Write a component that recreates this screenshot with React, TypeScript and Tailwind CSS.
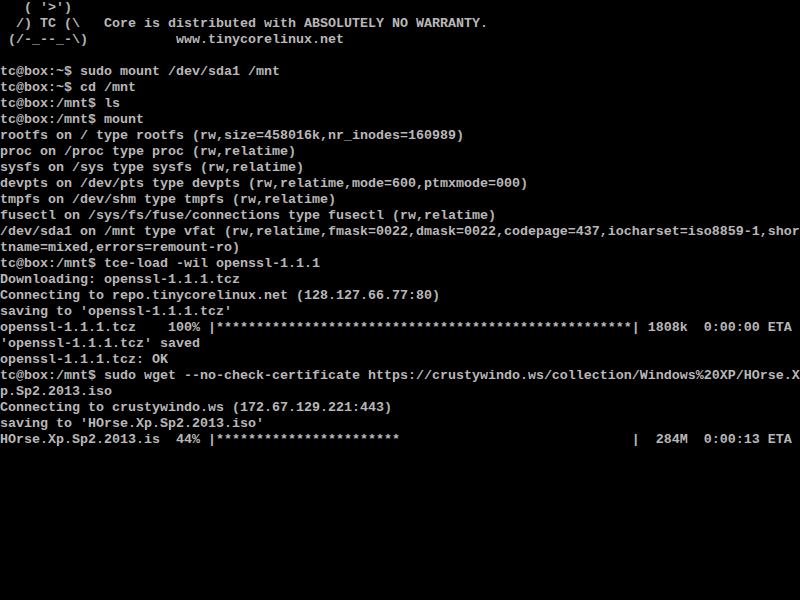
const stars = (n: number) => "*".repeat(n);

const LINES: string[] = [
  "   ( '>')",
  "  /) TC (\\   Core is distributed with ABSOLUTELY NO WARRANTY.",
  " (/-_--_-\\)           www.tinycorelinux.net",
  "",
  "tc@box:~$ sudo mount /dev/sda1 /mnt",
  "tc@box:~$ cd /mnt",
  "tc@box:/mnt$ ls",
  "tc@box:/mnt$ mount",
  "rootfs on / type rootfs (rw,size=458016k,nr_inodes=160989)",
  "proc on /proc type proc (rw,relatime)",
  "sysfs on /sys type sysfs (rw,relatime)",
  "devpts on /dev/pts type devpts (rw,relatime,mode=600,ptmxmode=000)",
  "tmpfs on /dev/shm type tmpfs (rw,relatime)",
  "fusectl on /sys/fs/fuse/connections type fusectl (rw,relatime)",
  "/dev/sda1 on /mnt type vfat (rw,relatime,fmask=0022,dmask=0022,codepage=437,iocharset=iso8859-1,shor",
  "tname=mixed,errors=remount-ro)",
  "tc@box:/mnt$ tce-load -wil openssl-1.1.1",
  "Downloading: openssl-1.1.1.tcz",
  "Connecting to repo.tinycorelinux.net (128.127.66.77:80)",
  "saving to 'openssl-1.1.1.tcz'",
  "openssl-1.1.1.tcz    100% |" + stars(52) + "| 1808k  0:00:00 ETA",
  "'openssl-1.1.1.tcz' saved",
  "openssl-1.1.1.tcz: OK",
  "tc@box:/mnt$ sudo wget --no-check-certificate https://crustywindo.ws/collection/Windows%20XP/HOrse.X",
  "p.Sp2.2013.iso",
  "Connecting to crustywindo.ws (172.67.129.221:443)",
  "saving to 'HOrse.Xp.Sp2.2013.iso'",
  "HOrse.Xp.Sp2.2013.is  44% |" + stars(23) + " ".repeat(29) + "|  284M  0:00:13 ETA",
];

export default function App() {
  return (
    <div className="w-[800px] h-[600px] bg-black overflow-hidden">
      <div className="text-[#b8b8b8] text-[13.333px] leading-4 font-bold font-['Liberation_Mono',monospace]">
        {LINES.map((line, i) => (
          <div key={i} className="h-4 whitespace-pre">
            {line}
          </div>
        ))}
      </div>
    </div>
  );
}
